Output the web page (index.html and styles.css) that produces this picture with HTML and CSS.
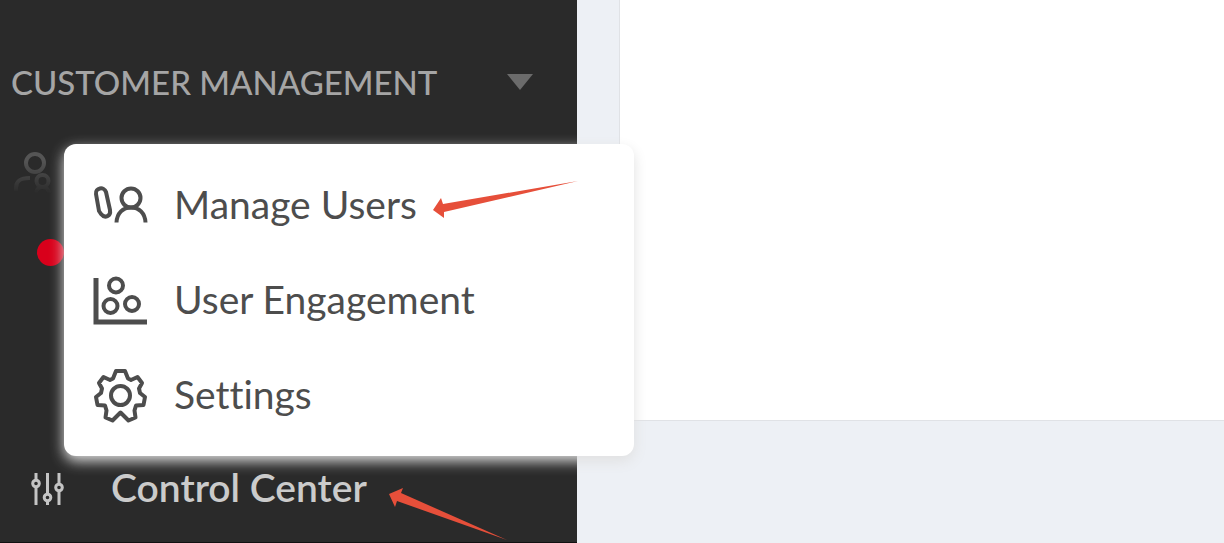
FILE: index.html
```html
<!DOCTYPE html>
<html lang="en">
<head>
    <meta charset="UTF-8">
    <meta name="viewport" content="width=device-width, initial-scale=1.0">
    <title>Customer Management</title>
    <link rel="stylesheet" href="styles.css">
</head>
<body>
    <aside class="sidebar">
        <button type="button" class="section-toggle">
            <span>CUSTOMER MANAGEMENT</span>
            <svg class="caret" viewBox="0 0 26 16"><path d="M0 0h26L13 16z"/></svg>
        </button>

        <div class="nav-row faded">
            <svg class="people-icon" viewBox="0 0 38 44">
                <circle cx="21" cy="12" r="9"/>
                <path d="M2 40v-3C2 30 6 27 16 27"/>
                <circle cx="28.5" cy="30" r="6"/>
                <path d="M22 43c0-5 3-7 6.500-7s6 2 7 7"/>
            </svg>
        </div>
        <div class="nav-row dot-row"><span class="dot"></span></div>

        <div class="nav-row control-row">
            <svg class="sliders-icon" viewBox="0 0 34 34">
                <path d="M5 1v7M5 15v18M16.500 1v21M16.500 29v4M28 1v11M28 19v14"/>
                <circle cx="5" cy="11.500" r="3.300"/>
                <circle cx="16.500" cy="25.500" r="3.300"/>
                <circle cx="28" cy="15.500" r="3.300"/>
            </svg>
            <a href="#" class="control-link">Control Center</a>
        </div>

        <nav class="popup">
            <a href="#" class="popup-item">
                <svg viewBox="0 0 56 54">
                    <path d="M4 17C3 11 12 9 14 15l4 18c1 6-5 9-9 4l-2-3z"/>
                    <circle cx="39" cy="21" r="9.500"/>
                    <path d="M24.500 45.500C25 36 31 30.500 39 30.500S53 36 53.500 45.500"/>
                </svg>
                <span>Manage Users</span>
            </a>
            <a href="#" class="popup-item">
                <svg viewBox="0 0 56 54">
                    <path class="axis" d="M4 6v44h51"/>
                    <circle cx="24" cy="13.500" r="7"/>
                    <circle cx="18.500" cy="34" r="7"/>
                    <circle cx="40" cy="32" r="7"/>
                </svg>
                <span>User Engagement</span>
            </a>
            <a href="#" class="popup-item">
                <svg viewBox="0 0 56 54">
                    <path d="M24 4h9l3 7.500 3 1.500 6.500-3 4.500 6-3 5.500 1 4.500 5 4-1.500 8-7.500.5-1.500 5 1 7-7 3-8-8-8 8-7-3 1-7-1.500-5-7.500-.5-1.500-8 5-4 1-4.500-3-5.500 4.500-6 6.500 3 3-1.500z"/>
                    <circle cx="28.500" cy="28.500" r="9.500"/>
                </svg>
                <span>Settings</span>
            </a>
        </nav>

        <svg class="arrow arrow-users" viewBox="0 0 145 38">
            <path d="M0 29 8 17l2 6L145 0 11 31v6z"/>
        </svg>
        <svg class="arrow arrow-control" viewBox="0 0 118 52">
            <path d="M0 6 14 0l-2 5 106 47L8 13l-2 6z"/>
        </svg>
    </aside>

    <main class="content">
        <section class="panel"></section>
    </main>
</body>
</html>
```

FILE: styles.css
```css
:root {
    --dark: #2a2a2a;
    --ink: #4d4d4d;
    --page: #edf0f5;
    --arrow: #e64f3a;
}

* {
    box-sizing: border-box;
    margin: 0;
    padding: 0;
}

body {
    display: flex;
    min-height: 100vh;
    background: var(--page);
    font-family: Lato, "Liberation Sans", sans-serif;
    font-variant-ligatures: none;
}

svg {
    display: block;
    flex: none;
    fill: none;
    stroke-linejoin: round;
    overflow: visible;
}

/* Sidebar */
.sidebar {
    position: relative;
    z-index: 1;
    flex: none;
    width: 577px;
    background: var(--dark);
    border-bottom: 1px solid #111;
}

.section-toggle {
    display: flex;
    align-items: center;
    justify-content: space-between;
    width: 100%;
    height: 112px;
    padding: 52px 44px 0 11px;
    border: 0;
    background: none;
    color: #a5a5a5;
    font: 500 33px/60px Lato, "Liberation Sans", sans-serif;
}

.caret {
    width: 26px;
    height: 16px;
    fill: #6b6b6b;
}

.nav-row {
    display: flex;
    align-items: center;
}

.faded {
    height: 122px;
    padding-left: 14px;
    -webkit-mask-image: linear-gradient(#000 40%, transparent 67%);
    mask-image: linear-gradient(#000 40%, transparent 67%);
}

.people-icon {
    width: 38px;
    height: 44px;
    stroke: #555;
    stroke-width: 4;
}

.dot-row {
    height: 36px;
    padding-left: 37px;
}

.dot {
    width: 27px;
    height: 27px;
    border-radius: 50%;
    background: #d9001b;
}

.control-row {
    gap: 46px;
    margin-top: 172px;
    height: 94px;
    padding-left: 31px;
}

.sliders-icon {
    width: 34px;
    height: 34px;
    stroke: #c4c4c4;
    stroke-width: 3;
}

.control-link {
    color: #cbcbcb;
    font-size: 39px;
    line-height: 52px;
    padding-bottom: 4px;
    font-weight: 600;
    text-decoration: none;
}

/* Flyout menu */
.popup {
    position: absolute;
    top: 144px;
    left: 64px;
    width: 570px;
    padding: 12px 28px 15px;
    border-radius: 12px;
    background: #fff;
    box-shadow: 0 5px 14px #e0e0e0;
}

.popup-item {
    display: flex;
    align-items: center;
    gap: 26px;
    height: 95px;
    color: var(--ink);
    font-size: 39px;
    text-decoration: none;
}

.popup-item svg {
    width: 56px;
    height: 54px;
    stroke: var(--ink);
    stroke-width: 4;
}

.popup-item .axis {
    stroke-width: 5;
    stroke-linejoin: miter;
}

/* Pointers */
.arrow {
    position: absolute;
    fill: var(--arrow);
}

.arrow-users {
    top: 181px;
    left: 433px;
    width: 145px;
    height: 38px;
}

.arrow-control {
    top: 488px;
    left: 389px;
    width: 118px;
    height: 52px;
}

/* Content */
.content {
    display: flex;
    flex: 1;
    padding: 0 0 122px 42px;
}

.panel {
    flex: 1;
    background: #fff;
    border: solid #e0e2e6;
    border-width: 0 0 1px 1px;
}
```
